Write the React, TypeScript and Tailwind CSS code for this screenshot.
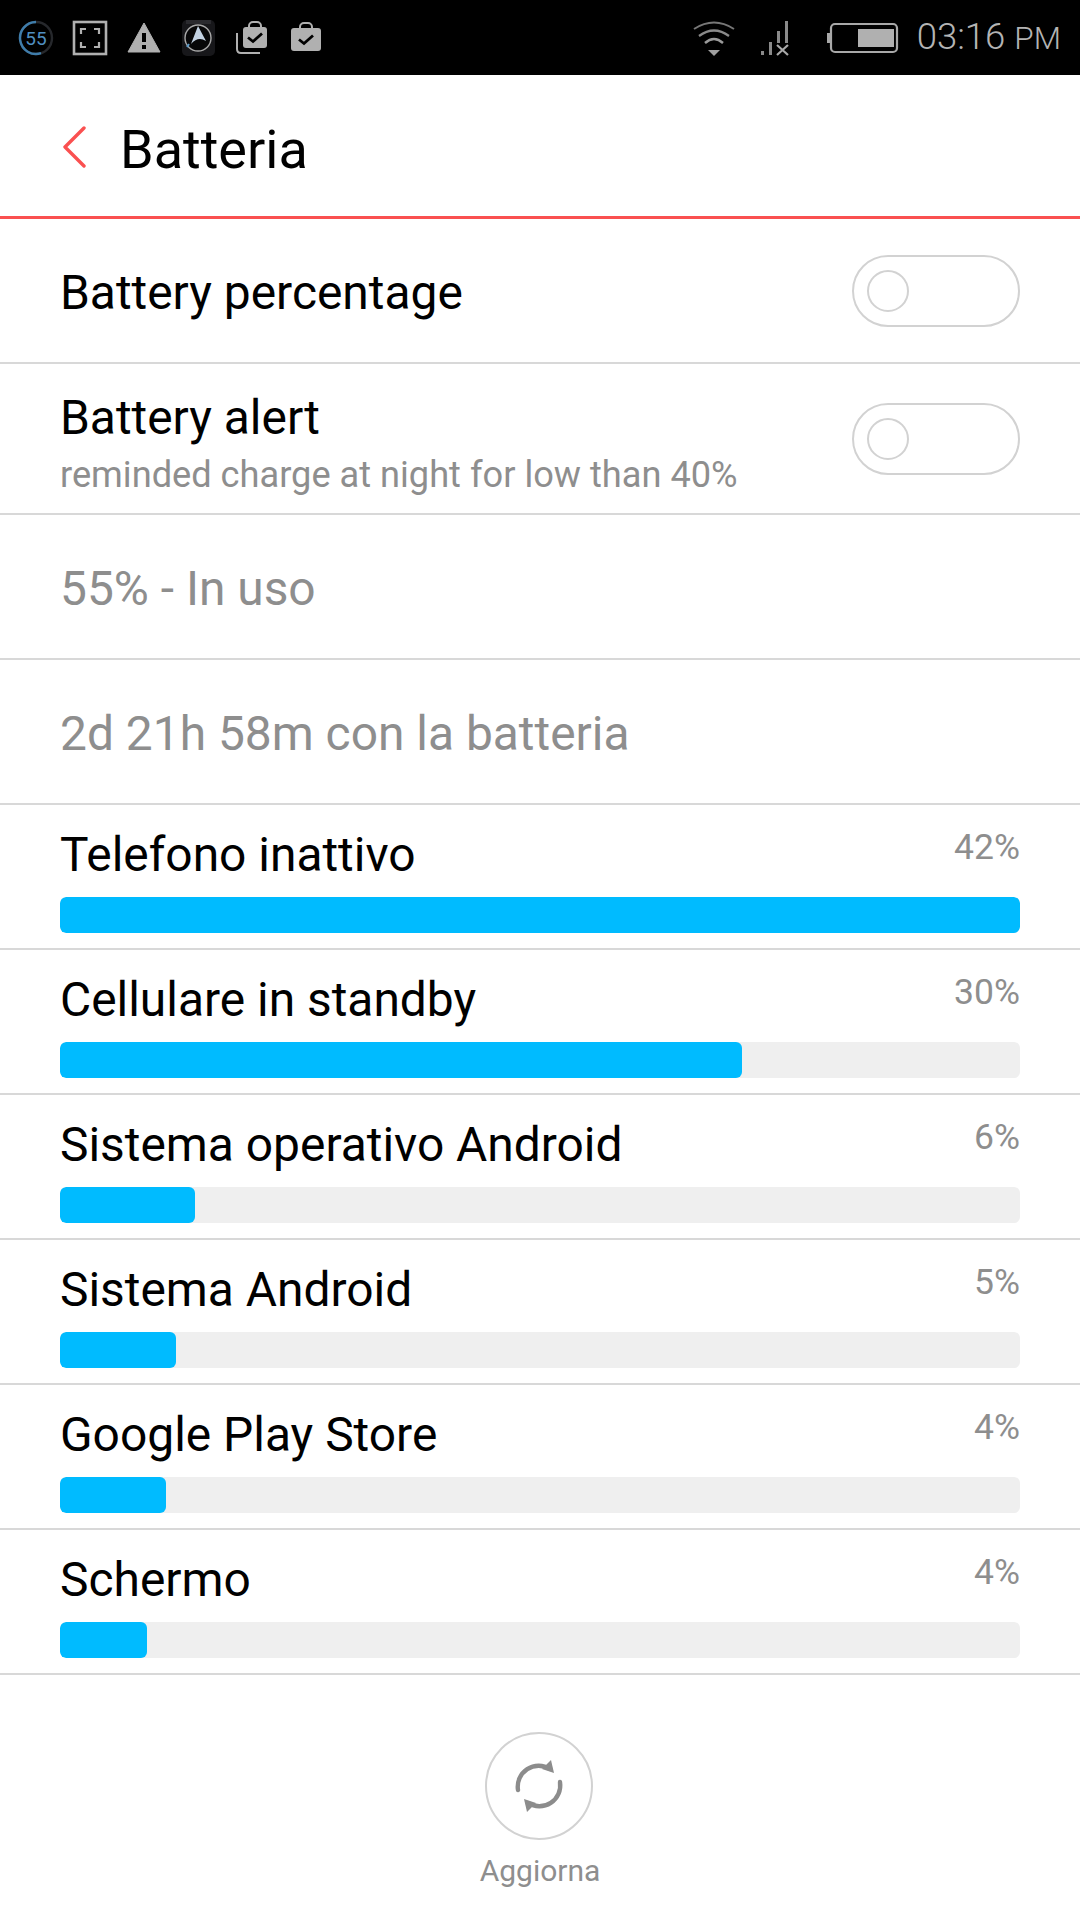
const ROBOTO = 'font-["Roboto",sans-serif]';

const usage = [
  { name: 'Telefono inattivo', pct: '42%', width: 960 },
  { name: 'Cellulare in standby', pct: '30%', width: 682 },
  { name: 'Sistema operativo Android', pct: '6%', width: 135 },
  { name: 'Sistema Android', pct: '5%', width: 116 },
  { name: 'Google Play Store', pct: '4%', width: 106 },
  { name: 'Schermo', pct: '4%', width: 87 },
];

function Case({ x = 0, y = 0, w = 30, h = 22 }: { x?: number; y?: number; w?: number; h?: number }) {
  const cx = x + w / 2;
  const cy = y + h / 2;
  return (
    <g>
      <rect x={cx - 6} y={y - 5} width={12} height={9} rx={4} fill="none" stroke="#b0b0b0" strokeWidth={2} />
      <rect x={x} y={y} width={w} height={h} rx={3} fill="#b0b0b0" />
      <path d={`M${cx - 7} ${cy} l5 4 l9 -8`} fill="none" stroke="#000" strokeWidth={2.8} />
    </g>
  );
}

function StatusBar() {
  return (
    <div className="flex h-[75px] items-center bg-black pl-[18px] pr-[19px]">
      <svg width={36} height={36} viewBox="0 0 36 36" className="shrink-0">
        <circle cx={18} cy={18} r={16} fill="none" stroke="#26282c" strokeWidth={2.4} />
        <path d="M18 2 A16 16 0 1 0 23 33.2" fill="none" stroke="#3f7dab" strokeWidth={2.4} />
        <text x={18} y={24.5} textAnchor="middle" fontSize={19} fill="#4f8fc0" fontFamily="Roboto">55</text>
      </svg>
      <svg width={36} height={36} viewBox="0 0 36 36" className="ml-[18px] shrink-0">
        <rect x={2} y={2} width={32} height={32} fill="none" stroke="#b0b0b0" strokeWidth={2.6} />
        <path d="M9 14V9h5M22 9h5v5M27 22v5h-5M14 27H9v-5" fill="none" stroke="#b0b0b0" strokeWidth={2.2} />
      </svg>
      <svg width={34} height={32} viewBox="0 0 34 32" className="ml-[19px] shrink-0">
        <path d="M17 1 L33 30 H1 Z" fill="#b0b0b0" stroke="#b0b0b0" strokeLinejoin="round" strokeWidth={1} />
        <rect x={15} y={11} width={4} height={9} fill="#000" />
        <rect x={15} y={23} width={4} height={4} fill="#000" />
      </svg>
      <svg width={36} height={36} viewBox="0 0 36 36" className="ml-[20px] shrink-0">
        <rect x={1} y={0} width={33} height={36} rx={5} fill="#17171a" />
        <rect x={5} y={0} width={25} height={4} fill="#2a2a2e" />
        <circle cx={17} cy={18} r={13} fill="#070708" stroke="#a8a8a8" strokeWidth={1.4} />
        <path d="M17 6 L25 21 Q17 16 10 24 Z" fill="#c3d2e2" />
        <path d="M8 24 L6 27" stroke="#5b9ac8" strokeWidth={2} />
      </svg>
      <svg width={32} height={34} viewBox="0 0 32 34" className="ml-[19px] shrink-0">
        <Case x={7} y={6} w={24} h={21} />
        <path d="M1 12 V28 Q1 32 5 32 H24" fill="none" stroke="#b0b0b0" strokeWidth={2} />
      </svg>
      <svg width={32} height={34} viewBox="0 0 32 34" className="ml-[22px] shrink-0">
        <Case x={1} y={7} w={30} h={23} />
      </svg>

      <svg width={42} height={36} viewBox="0 0 42 36" className="ml-auto shrink-0">
        <path d="M1 9 Q21 -4 41 9" fill="none" stroke="#777" strokeWidth={2} />
        <path d="M6 16 Q21 5 36 16" fill="none" stroke="#8a8a8a" strokeWidth={2.2} />
        <path d="M12 23 Q21 15 30 23" fill="none" stroke="#9a9a9a" strokeWidth={2.4} />
        <path d="M15 30 H27 L21 36 Z" fill="#a0a0a0" />
      </svg>
      <svg width={30} height={36} viewBox="0 0 30 36" className="ml-[25px] shrink-0">
        <rect x={1} y={31} width={3} height={4} fill="#8a8a8a" />
        <rect x={9} y={22} width={3} height={13} fill="#8a8a8a" />
        <rect x={17} y={11} width={3} height={12} fill="#8a8a8a" />
        <rect x={25} y={1} width={3} height={22} fill="#8a8a8a" />
        <path d="M17 25 L28 35 M28 25 L17 35" stroke="#a8a8a8" strokeWidth={2.2} />
      </svg>
      <svg width={72} height={32} viewBox="0 0 72 32" className="ml-[37px] shrink-0">
        <rect x={0} y={11} width={4} height={10} fill="#a8a8a8" />
        <rect x={4} y={2} width={66} height={28} rx={4} fill="none" stroke="#a8a8a8" strokeWidth={2.2} />
        <rect x={31} y={7} width={36} height={18} fill="#b0b0b0" />
      </svg>
      <div className={`ml-[18px] flex items-baseline whitespace-nowrap text-[#b4b4b4] ${ROBOTO}`}>
        <span className="text-[36.5px] leading-none font-light">03:16</span>
        <span className="ml-[9px] text-[31.5px] leading-none font-light">PM</span>
      </div>
    </div>
  );
}

function Toggle() {
  return (
    <div className="flex h-[72px] w-[168px] shrink-0 items-center rounded-full border-2 border-[#d2d2d2] pl-[13px]">
      <div className="size-[42px] rounded-full border-2 border-[#d2d2d2]" />
    </div>
  );
}

function RefreshIcon() {
  return (
    <svg width={52} height={54} viewBox="0 0 52 54" fill="none">
      <path d="M5 31 A21 21 0 0 1 37 10" stroke="#8c8c8c" strokeWidth={4.4} strokeLinecap="round" />
      <path d="M47 23 A21 21 0 0 1 15 44" stroke="#8c8c8c" strokeWidth={4.4} strokeLinecap="round" />
      <path d="M38 1 L41 14 L29 10 Z" fill="#8c8c8c" />
      <path d="M14 53 L11 40 L23 44 Z" fill="#8c8c8c" />
    </svg>
  );
}

export default function App() {
  return (
    <div className={`flex h-[1920px] w-[1080px] flex-col overflow-hidden bg-white ${ROBOTO}`}>
      <StatusBar />

      <header className="flex h-[144px] shrink-0 items-center border-b-[3px] border-[#fa5050] pl-[62px]">
        <svg width={24} height={42} viewBox="0 0 24 42" fill="none" className="mt-[2px] shrink-0">
          <path d="M22 2 L3 21 L22 40" stroke="#fa5050" strokeWidth={3.4} strokeLinecap="round" strokeLinejoin="round" />
        </svg>
        <h1 className="mt-[9px] ml-[34px] text-[54px] leading-none font-normal text-black">Batteria</h1>
      </header>

      <div className="flex h-[145px] shrink-0 items-center justify-between border-b-2 border-[#d8d8d8] px-[60px]">
        <span className="mt-[6px] text-[47.9px] leading-none text-black">Battery percentage</span>
        <Toggle />
      </div>

      <div className="flex h-[151px] shrink-0 items-center justify-between border-b-2 border-[#d8d8d8] px-[60px]">
        <div className="flex flex-col pt-[5px]">
          <span className="mt-[4px] text-[47.9px] leading-[52px] text-black">Battery alert</span>
          <span className="mt-[11px] text-[36.2px] leading-[40px] text-[#8e8e8e]">reminded charge at night for low than 40%</span>
        </div>
        <Toggle />
      </div>

      <div className="flex h-[145px] shrink-0 items-center border-b-2 border-[#d8d8d8] px-[60px] text-[47.9px] leading-none text-[#8e8e8e]">
        <span className="mt-[7px]">55% - In uso</span>
      </div>
      <div className="flex h-[145px] shrink-0 items-center border-b-2 border-[#d8d8d8] px-[60px] text-[47.9px] leading-none text-[#8e8e8e]">
        <span className="mt-[7px]">2d 21h 58m con la batteria</span>
      </div>

      {usage.map((item) => (
        <div key={item.name} className="flex h-[145px] shrink-0 flex-col border-b-2 border-[#d8d8d8] px-[60px] pt-[24px]">
          <div className="flex h-[68px] items-start justify-between">
            <span className="text-[47.9px] leading-[52px] text-black">{item.name}</span>
            <span className="-mt-[1px] text-[35.5px] leading-[38px] text-[#8e8e8e]">{item.pct}</span>
          </div>
          <div className="h-[36px] w-[960px] overflow-hidden rounded-[6px] bg-[#efefef]">
            <div className="h-full rounded-[6px] bg-[#00bbff]" style={{ width: item.width }} />
          </div>
        </div>
      ))}

      <div className="flex flex-1 flex-col items-center pt-[57px]">
        <div className="-ml-[2px] flex size-[108px] items-center justify-center rounded-full border-2 border-[#d2d2d2]">
          <RefreshIcon />
        </div>
        <span className="mt-[13px] text-[30px] leading-[36px] text-[#8e8e8e]">Aggiorna</span>
      </div>
    </div>
  );
}
